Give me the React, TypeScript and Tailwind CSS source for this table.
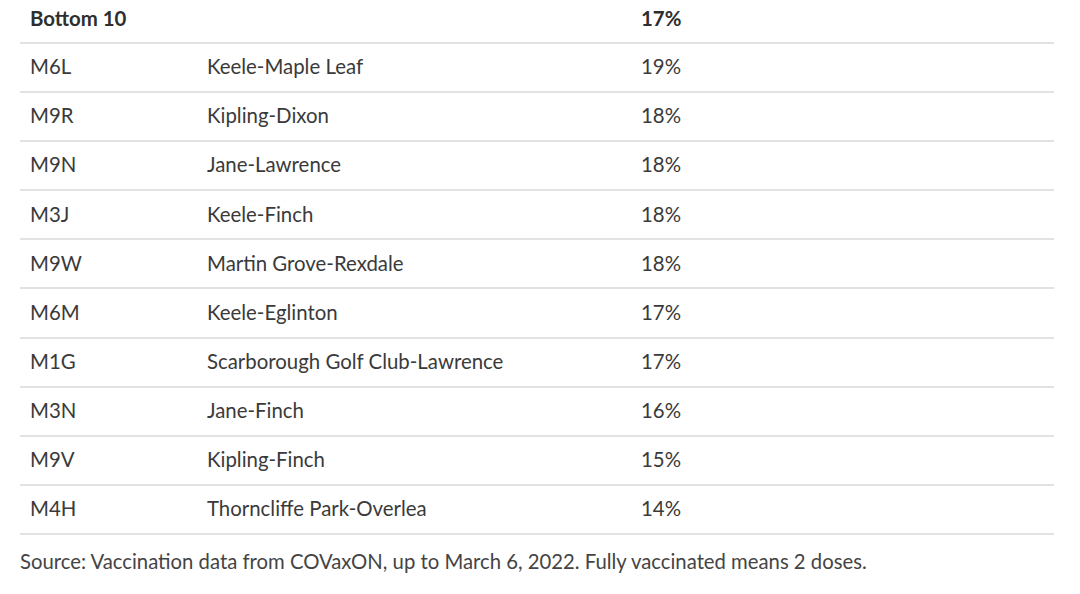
import React from 'react';

const rows: [string, string, string][] = [
  ['M6L', 'Keele-Maple Leaf', '19%'],
  ['M9R', 'Kipling-Dixon', '18%'],
  ['M9N', 'Jane-Lawrence', '18%'],
  ['M3J', 'Keele-Finch', '18%'],
  ['M9W', 'Martin Grove-Rexdale', '18%'],
  ['M6M', 'Keele-Eglinton', '17%'],
  ['M1G', 'Scarborough Golf Club-Lawrence', '17%'],
  ['M3N', 'Jane-Finch', '16%'],
  ['M9V', 'Kipling-Finch', '15%'],
  ['M4H', 'Thorncliffe Park-Overlea', '14%'],
];

export default function App() {
  return (
    <div className="w-[1080px] h-[594px] bg-white text-[#3a3a3a] font-['Lato',sans-serif] overflow-hidden">
      <div className="ml-[20px] w-[1034px]">
        {/* header */}
        <div className="flex items-center h-[44px] pb-[6px] border-b-2 border-[#e2e2e2] text-[20.4px] font-bold text-[#2e2e2e]">
          <div className="w-[187px] pl-[10px]">Bottom 10</div>
          <div className="w-[434px]"></div>
          <div>17%</div>
        </div>

        {rows.map(([code, name, pct]) => (
          <div key={code} className="flex items-center h-[49.1px] pb-[2px] border-b-2 border-[#e2e2e2] text-[20.4px]">
            <div className="w-[187px] pl-[10px]">{code}</div>
            <div className="w-[434px]">{name}</div>
            <div>{pct}</div>
          </div>
        ))}

        <p className="mt-[11px] text-[20.3px] text-[#444]">
          Source: Vaccination data from COVaxON, up to March 6, 2022. Fully vaccinated means 2 doses.
        </p>
      </div>
    </div>
  );
}
